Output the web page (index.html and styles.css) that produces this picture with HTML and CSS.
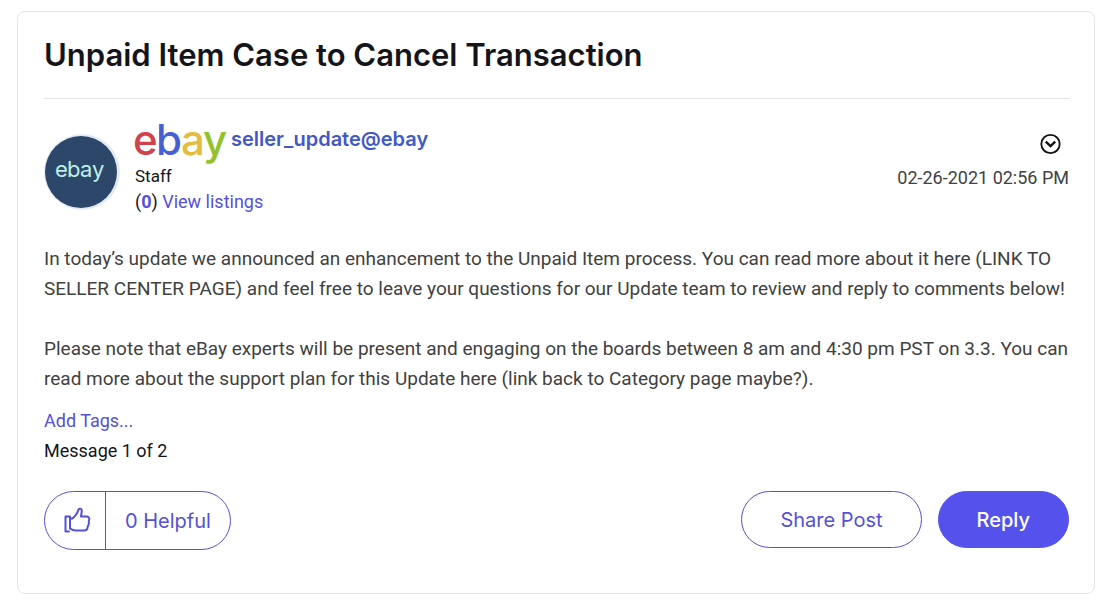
FILE: index.html
```html
<!DOCTYPE html>
<html lang="en">
<head>
<meta charset="utf-8">
<meta name="viewport" content="width=device-width, initial-scale=1">
<title>Unpaid Item Case to Cancel Transaction</title>
<link rel="stylesheet" href="styles.css">
</head>
<body>
<article class="post">
  <h1 class="post-title">Unpaid Item Case to Cancel Transaction</h1>
  <header class="post-header">
    <svg class="avatar" viewBox="0 0 76 76" role="img" aria-label="ebay avatar">
      <circle cx="38" cy="38" r="38" fill="#e3eaf3"/>
      <circle cx="37" cy="38" r="36" fill="#2d476b"/>
      <text class="avatar-mark" y="43"><tspan x="11">e</tspan><tspan x="23">b</tspan><tspan x="36">a</tspan><tspan x="48">y</tspan></text>
    </svg>
    <div class="author">
      <div class="author-line">
        <svg class="logo" viewBox="0 0 92 40" role="img" aria-label="ebay">
          <text class="logo-mark" y="31"><tspan x="-2" fill="#d0434d">e</tspan><tspan x="21" fill="#4460d2">b</tspan><tspan x="46" fill="#e4bc40">a</tspan><tspan x="68" fill="#93c22c">y</tspan></text>
        </svg>
        <a class="author-name" href="#">seller_update@ebay</a>
      </div>
      <div class="rank">Staff</div>
      <div class="listings">(<a class="count" href="#">0</a>) <a href="#">View listings</a></div>
    </div>
    <div class="meta">
      <button class="menu" type="button" aria-label="Post options">
        <svg viewBox="0 0 22 22" fill="none" stroke="#111"><circle cx="11.500" cy="11" r="9.200" stroke-width="1.800"/><path d="M6.800 8.700l4.700 4.400 4.700-4.400" stroke-width="2.400"/></svg>
      </button>
      <time datetime="2021-02-26T14:56">02-26-2021 02:56 PM</time>
    </div>
  </header>
  <div class="post-body">
    <p>In today’s update we announced an enhancement to the Unpaid Item process. You can read more about it here (LINK TO SELLER CENTER PAGE) and feel free to leave your questions for our Update team to review and reply to comments below!</p>
    <p>Please note that eBay experts will be present and engaging on the boards between 8 am and 4:30 pm PST on 3.3. You can read more about the support plan for this Update here (link back to Category page maybe?).</p>
  </div>
  <a class="tags" href="#">Add Tags...</a>
  <div class="position">Message 1 of 2</div>
  <footer class="actions">
    <div class="helpful">
      <button class="like" type="button" aria-label="Mark as helpful">
        <svg viewBox="0 0 28 28" fill="none" stroke="#5550d8" stroke-width="2" stroke-linejoin="round" stroke-linecap="round"><path d="M6 24.500H2.500V9.500H7v12c1.500 1.300 3.500 2 6 2h8c2.500 0 3.500-1 3.500-2.700 0-1 .2-1.400.7-2.200.8-1.300.8-2.500.6-3.600-.1-.7 0-1.200.3-2 .7-2-.5-3.500-2.800-3.500H18l.8-5.500c.2-2.500-3-3-3.600-.7-.8 3.400-2.800 5-4.400 7-1 1.200-2.200 1.500-3.800 1.500"/></svg>
      </button>
      <button class="helpful-count" type="button">0 Helpful</button>
    </div>
    <div class="action-group">
      <button class="btn" type="button">Share Post</button>
      <button class="btn btn-primary" type="button">Reply</button>
    </div>
  </footer>
</article>
</body>
</html>
```
FILE: styles.css
```css
* { box-sizing: border-box; }
body {
  margin: 0;
  padding: 11px 10px 11px 17px;
  background: #fff;
  color: #151519;
  font-family: Roboto, "Liberation Sans", sans-serif;
  font-size: 18px;
  line-height: 30px;
}
a { color: #5550d8; text-decoration: none; }
button { margin: 0; padding: 0; border: 0; background: none; color: #5550d8; font: inherit; cursor: pointer; }
svg { display: block; }
.post { padding: 23px 25px 43px 26px; border: 1px solid #e5e5e7; border-radius: 8px; }
.post-title {
  margin: 0;
  padding-bottom: 23px;
  border-bottom: 1px solid #e2e2e4;
  font-family: Inter, sans-serif;
  font-size: 31px;
  font-weight: 600;
  line-height: 40px;
}
.post-header { display: flex; align-items: flex-start; padding-top: 25px; }
.avatar { flex: none; width: 76px; height: 76px; margin-top: 10px; }
.avatar-mark { fill: #bdf0e6; font-family: Inter, sans-serif; font-size: 22px; }
.author { flex: 1; margin-left: 15px; }
.author-line { display: flex; align-items: flex-start; gap: 4px; }
.logo { width: 92px; height: 40px; overflow: visible; }
.logo-mark { font-family: Inter, sans-serif; font-size: 42px; font-weight: 500; }
.author-name { color: #4257c8; font-family: Inter, sans-serif; font-size: 20px; font-weight: 600; }
.rank { font-size: 17px; line-height: 24px; }
.listings { line-height: 28px; }
.count { font-weight: 700; }
.meta { display: flex; flex-direction: column; align-items: flex-end; gap: 8px; padding-top: 9px; color: #414141; }
.menu { margin-right: 8px; }
.menu svg { width: 22px; height: 22px; }
.post-body { padding-top: 28px; color: #414141; font-size: 19px; }
.post-body p { margin: 0 0 30px; }
.post-body p:last-child { margin-bottom: 12px; }
.tags { display: block; }
.actions { display: flex; justify-content: space-between; align-items: flex-start; padding-top: 25px; font-family: Inter, sans-serif; font-size: 20px; }
.helpful { display: flex; height: 59px; border: 1px solid #5550d8; border-radius: 30px; }
.like { padding: 0 14px 0 18px; border-right: 1px solid #5550d8; }
.like svg { width: 28px; height: 28px; }
.helpful-count { padding: 0 19px; }
.action-group { display: flex; gap: 16px; }
.btn { height: 57px; padding: 0 38px; border: 1px solid #5550d8; border-radius: 29px; }
.btn-primary { border-color: #5451ed; background: #5451ed; color: #fff; font-weight: 500; }
```
